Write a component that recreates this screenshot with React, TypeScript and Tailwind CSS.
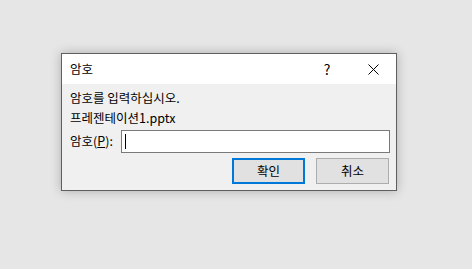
const font = { fontFamily: '"Noto Sans CJK KR", "Noto Sans", sans-serif' };

export default function App() {
  return (
    <div className="w-[472px] h-[269px] bg-[#e6e6e6] pt-[53px] pl-[61px]" style={font}>
      <PasswordDialog fileName="프레젠테이션1.pptx" />
    </div>
  );
}

function PasswordDialog(props: { fileName: string }) {
  return (
    <div className="w-[336px] h-[138px] border border-[#5f5f5f] bg-[#f0f0f0] shadow-[0_0_10px_rgba(0,0,0,0.25)] flex flex-col text-[12.5px] text-black">
      {/* Title bar */}
      <div className="h-[30px] bg-white flex items-center pl-[8px]">
        <span className="flex-1 leading-none">암호</span>
        <span className="w-[46px] text-center text-[14px] leading-none">?</span>
        <span className="w-[46px] h-[30px] flex items-center justify-center">
          <svg width="11" height="11" viewBox="0 0 11 11">
            <path d="M0.5 0.5 L10.5 10.5 M10.5 0.5 L0.5 10.5" stroke="#000" strokeWidth="1" fill="none" />
          </svg>
        </span>
      </div>
      {/* Body */}
      <div className="flex-1 flex flex-col pl-[8px] pr-[6px] pt-[4px]">
        <p className="leading-[20px]">암호를 입력하십시오.</p>
        <p className="leading-[20px]">{props.fileName}</p>
        <div className="flex items-center mt-[2px]">
          <label className="w-[51px] leading-none">
            암호(<span className="underline">P</span>):
          </label>
          <div className="w-[269px] h-[23px] bg-white border border-[#7a7a7a] flex items-center pl-[3px]">
            <span className="w-px h-[15px] bg-black" />
          </div>
        </div>
        <div className="flex justify-end gap-[11px] mt-[5px] pr-[1px]">
          <button className="w-[73px] h-[26px] bg-[#e1e1e1] border-2 border-[#0078d7] leading-none">확인</button>
          <button className="w-[73px] h-[26px] bg-[#e1e1e1] border border-[#adadad] leading-none">취소</button>
        </div>
      </div>
    </div>
  );
}
